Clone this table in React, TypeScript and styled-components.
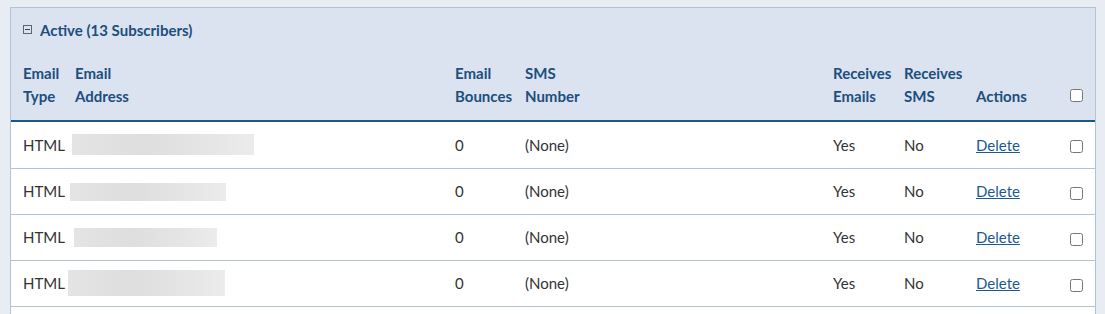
import React from "react";
import styled, { createGlobalStyle } from "styled-components";

const GlobalStyle = createGlobalStyle`
  html, body {
    margin: 0;
    background: #e8edf3;
    font-family: Lato, "Open Sans", sans-serif;
    font-size: 15px;
    overflow: hidden;
  }
`;

const Page = styled.div`
  padding: 7px 9px 0 10px;
`;

const Panel = styled.section`
  border: 1px solid #b3c2d5;
  border-bottom: none;
  background: #ffffff;
  padding-bottom: 7px;
`;

const PanelHeader = styled.div`
  background: #dae3ef;
  padding: 10px 12px 0 12px;
  line-height: 20px;
`;

const Toggle = styled.button`
  display: inline-flex;
  align-items: center;
  gap: 8px;
  border: none;
  background: none;
  padding: 0;
  font: inherit;
  font-weight: 700;
  font-size: 15px;
  color: #1d4e7e;
  cursor: pointer;
`;

const MinusBox = styled.span`
  position: relative;
  width: 7px;
  height: 7px;
  border: 1px solid #5a6670;
  &::after {
    content: "";
    position: absolute;
    left: 1px;
    right: 1px;
    top: 3px;
    height: 1px;
    background: #3a4650;
  }
`;

const Table = styled.table`
  width: 100%;
  border-collapse: collapse;
  table-layout: fixed;
`;

const HeadCell = styled.th`
  background: #dae3ef;
  text-align: left;
  vertical-align: bottom;
  font-weight: 700;
  color: #1d4e7e;
  line-height: 23px;
  padding: 22px 6px 12px;
  border-bottom: 2px solid #155a8c;
  white-space: nowrap;
  &:first-child {
    padding-left: 12px;
  }
`;

const Row = styled.tr`
  border-bottom: 1px solid #b3c2d5;
  &:first-child td {
    height: 46px;
  }
`;

const Cell = styled.td`
  height: 45px;
  padding: 0 6px;
  color: #333;
  vertical-align: middle;
  &:first-child {
    padding-left: 12px;
  }
`;

const Masked = styled.span<{ $w: number; $h: number; $shift: number }>`
  display: inline-block;
  vertical-align: middle;
  width: ${(p) => p.$w}px;
  height: ${(p) => p.$h}px;
  margin-left: ${(p) => p.$shift}px;
  background: linear-gradient(90deg, #e4e4e4, #dedede 40%, #e6e6e6 80%, #ececec);
  filter: blur(0.6px);
`;

const DeleteLink = styled.a`
  color: #1a5a8f;
  text-decoration: underline;
  cursor: pointer;
`;

const Check = styled.input`
  margin: 0;
  width: 13px;
  height: 13px;
  vertical-align: middle;
`;

const subscribers = [
  { w: 182, h: 21, shift: -3 },
  { w: 156, h: 18, shift: -5 },
  { w: 143, h: 19, shift: -1 },
  { w: 157, h: 26, shift: -7 },
];

export default function App() {
  return (
    <>
      <GlobalStyle />
      <Page>
        <Panel>
          <PanelHeader>
            <Toggle>
              <MinusBox />
              Active (13 Subscribers)
            </Toggle>
          </PanelHeader>
          <Table>
            <colgroup>
              <col style={{ width: 58 }} />
              <col style={{ width: 380 }} />
              <col style={{ width: 70 }} />
              <col style={{ width: 308 }} />
              <col style={{ width: 71 }} />
              <col style={{ width: 72 }} />
              <col style={{ width: 94 }} />
              <col />
            </colgroup>
            <thead>
              <tr>
                <HeadCell>Email<br />Type</HeadCell>
                <HeadCell>Email<br />Address</HeadCell>
                <HeadCell>Email<br />Bounces</HeadCell>
                <HeadCell>SMS<br />Number</HeadCell>
                <HeadCell>Receives<br />Emails</HeadCell>
                <HeadCell>Receives<br />SMS</HeadCell>
                <HeadCell>Actions</HeadCell>
                <HeadCell>
                  <Check type="checkbox" style={{ marginBottom: 5 }} />
                </HeadCell>
              </tr>
            </thead>
            <tbody>
              {subscribers.map((s, i) => (
                <Row key={i}>
                  <Cell>HTML</Cell>
                  <Cell>
                    <Masked $w={s.w} $h={s.h} $shift={s.shift} />
                  </Cell>
                  <Cell>0</Cell>
                  <Cell>(None)</Cell>
                  <Cell>Yes</Cell>
                  <Cell>No</Cell>
                  <Cell>
                    <DeleteLink>Delete</DeleteLink>
                  </Cell>
                  <Cell>
                    <Check type="checkbox" />
                  </Cell>
                </Row>
              ))}
            </tbody>
          </Table>
        </Panel>
      </Page>
    </>
  );
}
